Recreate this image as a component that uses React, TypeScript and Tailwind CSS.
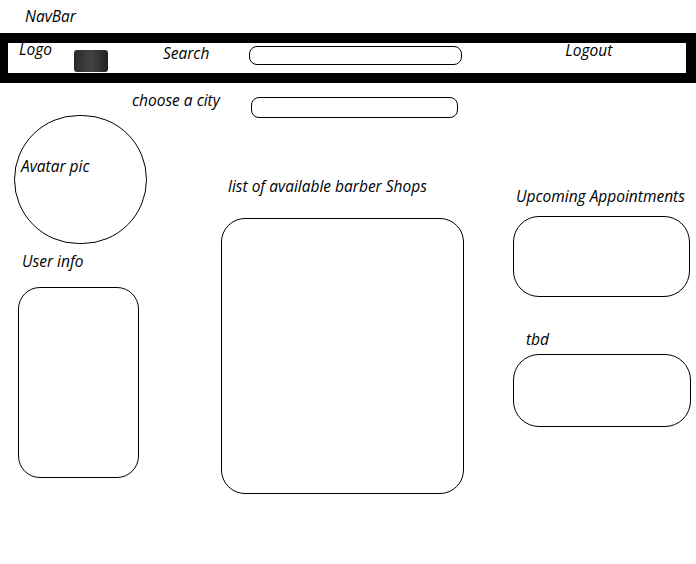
import React from "react";

const t = "font-['Open_Sans',sans-serif] italic text-[15.5px] leading-[20px] text-black whitespace-nowrap";

export default function App() {
  return (
    <div className="w-[696px] h-[564px] bg-white overflow-hidden">
      <div className="h-[33px] pt-[6px] pl-[25px]">
        <div className={t}>NavBar</div>
      </div>
      <div className="h-[50px] border-t-[10px] border-b-[10px] border-l-[8px] border-r-[10px] border-black flex items-start">
        <div className={`${t} ml-[11px] -mt-[4px]`}>Logo</div>
        <div className="ml-[22px] mt-[7px] w-[34px] h-[22px] rounded-[3px] bg-gradient-to-r from-[#2a2a2a] via-[#444] to-[#222]" />
        <div className={`${t} ml-[55px] mt-[0px]`}>Search</div>
        <div className="ml-[40px] mt-[3px] w-[213px] h-[19px] rounded-[8px] border border-black" />
        <div className={`${t} ml-[103px] -mt-[3px]`}>Logout</div>
      </div>
      <div className="h-[32px] flex items-start">
        <div className={`${t} ml-[132px] mt-[7px]`}>choose a city</div>
        <div className="ml-[31px] mt-[14px] w-[207px] h-[21px] rounded-[8px] border border-black" />
      </div>
      <div className="flex items-start">
        <div className="ml-[14px] w-[133px] flex flex-col">
          <div className="w-[133px] h-[129px] rounded-full border border-black pt-[40px] pl-[6px]">
            <div className={t}>Avatar pic</div>
          </div>
          <div className={`${t} ml-[8px] mt-[7px]`}>User info</div>
          <div className="ml-[4px] mt-[16px] w-[121px] h-[191px] rounded-[22px] border border-black" />
        </div>
        <div className="ml-[74px] w-[243px] flex flex-col">
          <div className={`${t} ml-[7px] mt-[61px]`}>list of available barber Shops</div>
          <div className="mt-[22px] w-[243px] h-[276px] rounded-[24px] border border-black" />
        </div>
        <div className="ml-[49px] w-[177px] flex flex-col">
          <div className={`${t} ml-[3px] mt-[71px]`}>Upcoming Appointments</div>
          <div className="mt-[10px] w-[177px] h-[81px] rounded-[26px] border border-black" />
          <div className={`${t} ml-[13px] mt-[32px]`}>tbd</div>
          <div className="mt-[5px] w-[178px] h-[73px] rounded-[26px] border border-black" />
        </div>
      </div>
    </div>
  );
}
